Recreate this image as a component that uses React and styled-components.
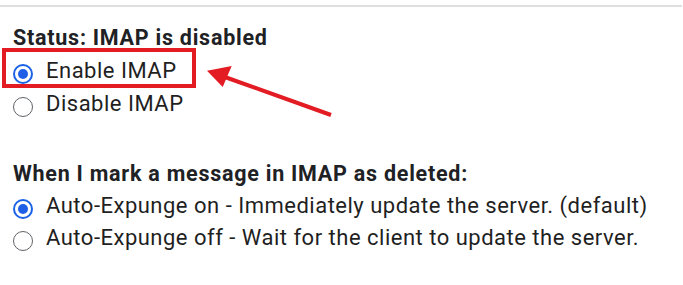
import React from "react";
import styled, { createGlobalStyle } from "styled-components";

const Global = createGlobalStyle`
  html, body { margin: 0; padding: 0; background: #fff; }
  body { font-family: Roboto, "Liberation Sans", Arial, sans-serif; color: #202124; }
`;

const Page = styled.div`
  position: relative;
  width: 683px;
  height: 285px;
  overflow: hidden;
  background: #fff;
`;

const Divider = styled.div`
  margin-top: 5px;
  height: 2px;
  width: 682px;
  background: #dfdfdf;
`;

const Content = styled.div`
  padding: 0 13px;
  display: flex;
  flex-direction: column;
`;

const Section = styled.div`
  display: flex;
  flex-direction: column;
  margin-top: ${(p) => p.$top}px;
`;

const Heading = styled.div`
  font-size: 21.5px;
  font-weight: 700;
  line-height: 28px;
  margin-bottom: 5px;
  letter-spacing: 0.75px;
  white-space: nowrap;
`;

const Row = styled.label`
  display: flex;
  align-items: center;
  height: ${(p) => p.$h}px;
  gap: 13px;
  font-size: 22px;
  line-height: 28px;
  letter-spacing: 0.5px;
  white-space: nowrap;
  color: #1f1f1f;
`;

const Label = styled.span`
  margin-bottom: 6px;
`;

const Radio = styled.span`
  box-sizing: border-box;
  flex: none;
  width: 20px;
  height: 20px;
  border-radius: 50%;
  border: ${(p) => (p.$checked ? "2px solid #1b62e6" : "1.6px solid #5f6368")};
  display: flex;
  align-items: center;
  justify-content: center;
  &::after {
    content: "";
    display: ${(p) => (p.$checked ? "block" : "none")};
    width: 10px;
    height: 10px;
    border-radius: 50%;
    background: #1f5fe8;
  }
`;

const Highlight = styled.div`
  position: absolute;
  left: 2px;
  top: 48px;
  width: 194px;
  height: 40px;
  box-sizing: border-box;
  border: 4px solid #e31b23;
  pointer-events: none;
`;

const ArrowSvg = styled.svg`
  position: absolute;
  left: 0;
  top: 0;
  pointer-events: none;
`;

const Option = ({ checked, children, h = 33 }) => (
  <Row $h={h}>
    <Radio $checked={checked} />
    <Label>{children}</Label>
  </Row>
);

export default function App() {
  return (
    <Page>
      <Global />
      <Divider />
      <Content>
        <Section $top={17}>
          <Heading>Status: IMAP is disabled</Heading>
          <Option checked>Enable IMAP</Option>
          <Option>Disable IMAP</Option>
        </Section>
        <Section $top={37}>
          <Heading>When I mark a message in IMAP as deleted:</Heading>
          <Option checked h={32}>
            Auto-Expunge on - Immediately update the server. (default)
          </Option>
          <Option h={32}>
            Auto-Expunge off - Wait for the client to update the server.
          </Option>
        </Section>
      </Content>
      <Highlight />
      <ArrowSvg width="683" height="285" viewBox="0 0 683 285">
        <line x1="331" y1="115" x2="222" y2="76" stroke="#e31b23" strokeWidth="4" />
        <polygon points="207,70.7 231.7,66 222.7,87" fill="#e31b23" />
      </ArrowSvg>
    </Page>
  );
}
